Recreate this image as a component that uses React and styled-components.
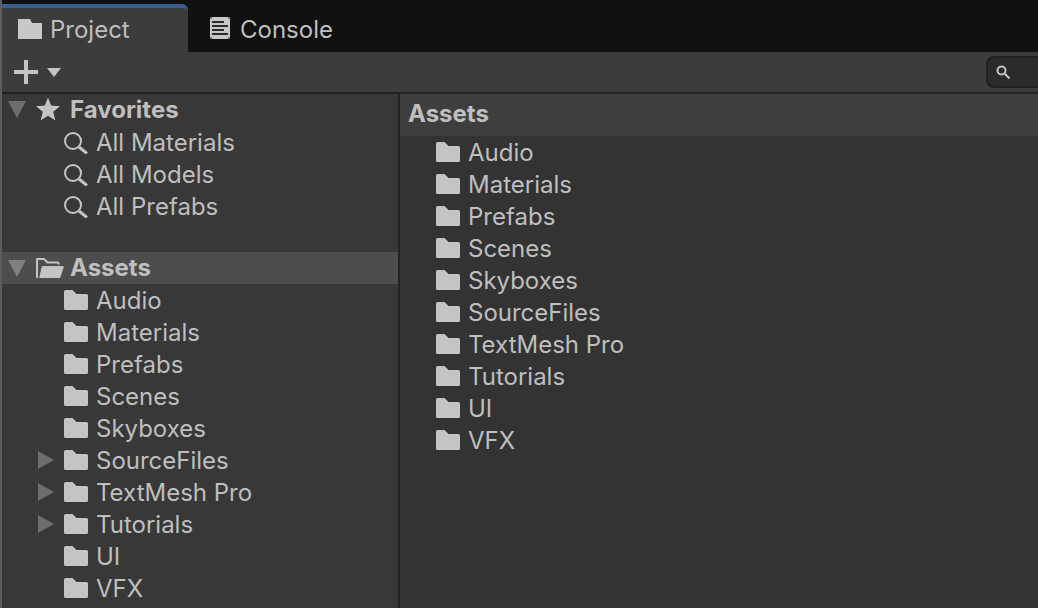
import React from "react";
import styled, { createGlobalStyle } from "styled-components";

const GlobalStyle = createGlobalStyle`
  html, body {
    margin: 0;
    padding: 0;
    height: 100%;
    overflow: hidden;
    background: #383838;
  }
  #root {
    height: 100%;
  }
`;

const FolderIcon = () => (
  <svg width="24" height="20" viewBox="0 0 24 20" fill="#c4c4c4">
    <path d="M1.5 0H8.5L12.5 4H22.5A1.5 1.5 0 0 1 24 5.5V18.5A1.5 1.5 0 0 1 22.5 20H1.5A1.5 1.5 0 0 1 0 18.5V1.5A1.5 1.5 0 0 1 1.5 0Z" />
  </svg>
);

const OpenFolderIcon = () => (
  <svg width="28" height="20" viewBox="0 0 28 20" fill="#c4c4c4">
    <path d="M1.5 0H8.5L12 3.5H22A1.5 1.5 0 0 1 23.5 5V6.5H21.5V5.5H11L7.8 2H2V20H1.5A1.5 1.5 0 0 1 0 18.5V1.5A1.5 1.5 0 0 1 1.5 0Z" />
    <path d="M7 8H26.5A1.2 1.2 0 0 1 27.6 9.6L24.5 19A1.5 1.5 0 0 1 23 20H3.2L5.6 9A1.5 1.5 0 0 1 7 8Z" />
  </svg>
);

const StarIcon = () => (
  <svg width="24" height="24" viewBox="0 0 24 24" fill="#c4c4c4">
    <path d="M12 0.5L15.2 8.6L24 9.2L17.2 14.8L19.4 23.4L12 18.7L4.6 23.4L6.8 14.8L0 9.2L8.8 8.6Z" />
  </svg>
);

const SearchIcon = () => (
  <svg width="24" height="24" viewBox="0 0 24 24" fill="none" stroke="#c4c4c4">
    <circle cx="9" cy="11" r="8" strokeWidth="2" />
    <path d="M15 17L23 23.5" strokeWidth="3" />
  </svg>
);

const SmallSearchIcon = () => (
  <svg width="14" height="14" viewBox="0 0 14 14" fill="none" stroke="#c4c4c4">
    <circle cx="5.5" cy="5.5" r="4" strokeWidth="2" />
    <path d="M8.5 8.5L13.5 13.5" strokeWidth="2" />
  </svg>
);

const ConsoleIcon = () => (
  <svg width="20" height="22" viewBox="0 0 20 22">
    <rect width="20" height="22" fill="#c8c8c8" />
    <path fill="#777777" d="M0 0H2V2H0ZM18 0H20V2H18ZM0 20H2V22H0ZM18 20H20V22H18Z" />
    <path fill="#2a2a2a" d="M2 4H14V6H2ZM2 8H18V10H2ZM2 12H14V14H2ZM2 16H18V18H2Z" />
  </svg>
);

const TabFolderIcon = () => (
  <svg width="24" height="20" viewBox="0 0 24 20" fill="#c8c8c8">
    <path d="M0 0H12L14 4H24V20H0Z" />
  </svg>
);

const PlusIcon = () => (
  <svg width="24" height="24" viewBox="0 0 24 24" fill="#c4c4c4">
    <path d="M10 0H14V10H24V14H14V24H10V14H0V10H10Z" />
  </svg>
);

const Window = styled.div`
  height: 100vh;
  display: flex;
  flex-direction: column;
  font-family: Inter, "Liberation Sans", sans-serif;
  font-size: 24px;
  color: #bfbfbf;
  overflow: hidden;
  border-left: 2px solid #5c5c5c;
`;

const TabBar = styled.div`
  height: 52px;
  flex: none;
  display: flex;
  align-items: flex-end;
  background: #111111;
`;

const Tab = styled.div`
  display: flex;
  align-items: center;
  box-sizing: border-box;
  height: 48px;
  width: ${(p) => p.$width}px;
  gap: ${(p) => p.$gap}px;
  padding-left: ${(p) => p.$pad}px;
  padding-top: 2px;
  ${(p) =>
    p.$active
      ? `background: #3c3c3c;
         border-top: 4px solid #3a5e8f;
         border-top-right-radius: 6px;
         padding-top: 0;
         padding-bottom: 2px;`
      : ""}
`;

const TabIcon = styled.div`
  display: flex;
  margin-bottom: ${(p) => p.$lift || 0}px;
`;

const Toolbar = styled.div`
  height: 40px;
  flex: none;
  display: flex;
  align-items: center;
  justify-content: space-between;
  box-sizing: border-box;
  background: #3c3c3c;
  padding-left: 12px;
`;

const AddButton = styled.div`
  display: flex;
  align-items: center;
  gap: 9px;
`;

const DropArrow = styled.div`
  width: 0;
  height: 0;
  border-left: 7px solid transparent;
  border-right: 7px solid transparent;
  border-top: 9px solid #c4c4c4;
`;

const SearchField = styled.div`
  display: flex;
  align-items: center;
  box-sizing: border-box;
  width: 60px;
  height: 32px;
  margin-right: -8px;
  padding-left: 8px;
  background: #2a2a2a;
  border: 2px solid #212121;
  border-radius: 8px;
`;

const Panels = styled.div`
  flex: 1;
  min-height: 0;
  display: flex;
  border-top: 2px solid #232323;
`;

const LeftPanel = styled.div`
  width: 396px;
  flex: none;
  background: #383838;
  border-right: 2px solid #232323;
`;

const RightPanel = styled.div`
  flex: 1;
  background: #333333;
`;

const Section = styled.div`
  padding-bottom: ${(p) => p.$gap || 0}px;
`;

const Row = styled.div`
  display: flex;
  align-items: center;
  height: 32px;
  padding-left: ${(p) => p.$indent}px;
  background: ${(p) => (p.$selected ? "#4d4d4d" : "transparent")};
  white-space: nowrap;
`;

const HeaderRow = styled(Row)`
  height: 30px;
  margin-bottom: 2px;
`;

const Arrow = styled.div`
  width: 0;
  height: 0;
  ${(p) =>
    p.$open
      ? `border-left: 9px solid transparent;
         border-right: 9px solid transparent;
         border-top: 17px solid ${p.$light ? "#808080" : "#6e6e6e"};`
      : `border-top: 9px solid transparent;
         border-bottom: 9px solid transparent;
         border-left: 16px solid #6e6e6e;`}
`;

const ArrowSlot = styled.div`
  flex: none;
  width: ${(p) => p.$width}px;
  padding-left: ${(p) => p.$left || 0}px;
  box-sizing: border-box;
`;

const IconSlot = styled.div`
  flex: none;
  display: flex;
  align-items: center;
  width: ${(p) => p.$width}px;
`;

const Label = styled.span`
  font-weight: ${(p) => (p.$bold ? 700 : 400)};
  margin-bottom: ${(p) => p.$lift || 0}px;
`;

const PathBar = styled.div`
  height: 42px;
  display: flex;
  align-items: center;
  box-sizing: border-box;
  padding-left: 8px;
  padding-bottom: 4px;
  background: #3e3e3e;
  font-weight: 700;
`;

const favorites = ["All Materials", "All Models", "All Prefabs"];

const assets = [
  { name: "Audio" },
  { name: "Materials" },
  { name: "Prefabs" },
  { name: "Scenes" },
  { name: "Skyboxes" },
  { name: "SourceFiles", expandable: true },
  { name: "TextMesh Pro", expandable: true },
  { name: "Tutorials", expandable: true },
  { name: "UI" },
  { name: "VFX" },
];

const App = () => {
  return (
    <>
      <GlobalStyle />
      <Window>
        <TabBar>
          <Tab $active $width={186} $pad={16} $gap={8}>
            <TabFolderIcon />
            <span>Project</span>
          </Tab>
          <Tab $width={164} $pad={22} $gap={10}>
            <TabIcon $lift={2}>
              <ConsoleIcon />
            </TabIcon>
            <span>Console</span>
          </Tab>
        </TabBar>
        <Toolbar>
          <AddButton>
            <PlusIcon />
            <DropArrow />
          </AddButton>
          <SearchField>
            <SmallSearchIcon />
          </SearchField>
        </Toolbar>
        <Panels>
          <LeftPanel>
            <Section $gap={30}>
              <HeaderRow $indent={6}>
                <ArrowSlot $width={28}>
                  <Arrow $open />
                </ArrowSlot>
                <IconSlot $width={34}>
                  <StarIcon />
                </IconSlot>
                <Label $bold>Favorites</Label>
              </HeaderRow>
              {favorites.map((name) => (
                <Row key={name} $indent={62}>
                  <IconSlot $width={32}>
                    <SearchIcon />
                  </IconSlot>
                  <Label>{name}</Label>
                </Row>
              ))}
            </Section>
            <Section>
              <Row $indent={6} $selected>
                <ArrowSlot $width={28}>
                  <Arrow $open $light />
                </ArrowSlot>
                <IconSlot $width={34}>
                  <OpenFolderIcon />
                </IconSlot>
                <Label $bold $lift={2}>
                  Assets
                </Label>
              </Row>
              {assets.map((a) => (
                <Row key={a.name} $indent={34}>
                  <ArrowSlot $width={28} $left={2}>
                    {a.expandable && <Arrow />}
                  </ArrowSlot>
                  <IconSlot $width={32}>
                    <FolderIcon />
                  </IconSlot>
                  <Label>{a.name}</Label>
                </Row>
              ))}
            </Section>
          </LeftPanel>
          <RightPanel>
            <PathBar>Assets</PathBar>
            {assets.map((a) => (
              <Row key={a.name} $indent={36}>
                <IconSlot $width={32}>
                  <FolderIcon />
                </IconSlot>
                <Label>{a.name}</Label>
              </Row>
            ))}
          </RightPanel>
        </Panels>
      </Window>
    </>
  );
};

export default App;
